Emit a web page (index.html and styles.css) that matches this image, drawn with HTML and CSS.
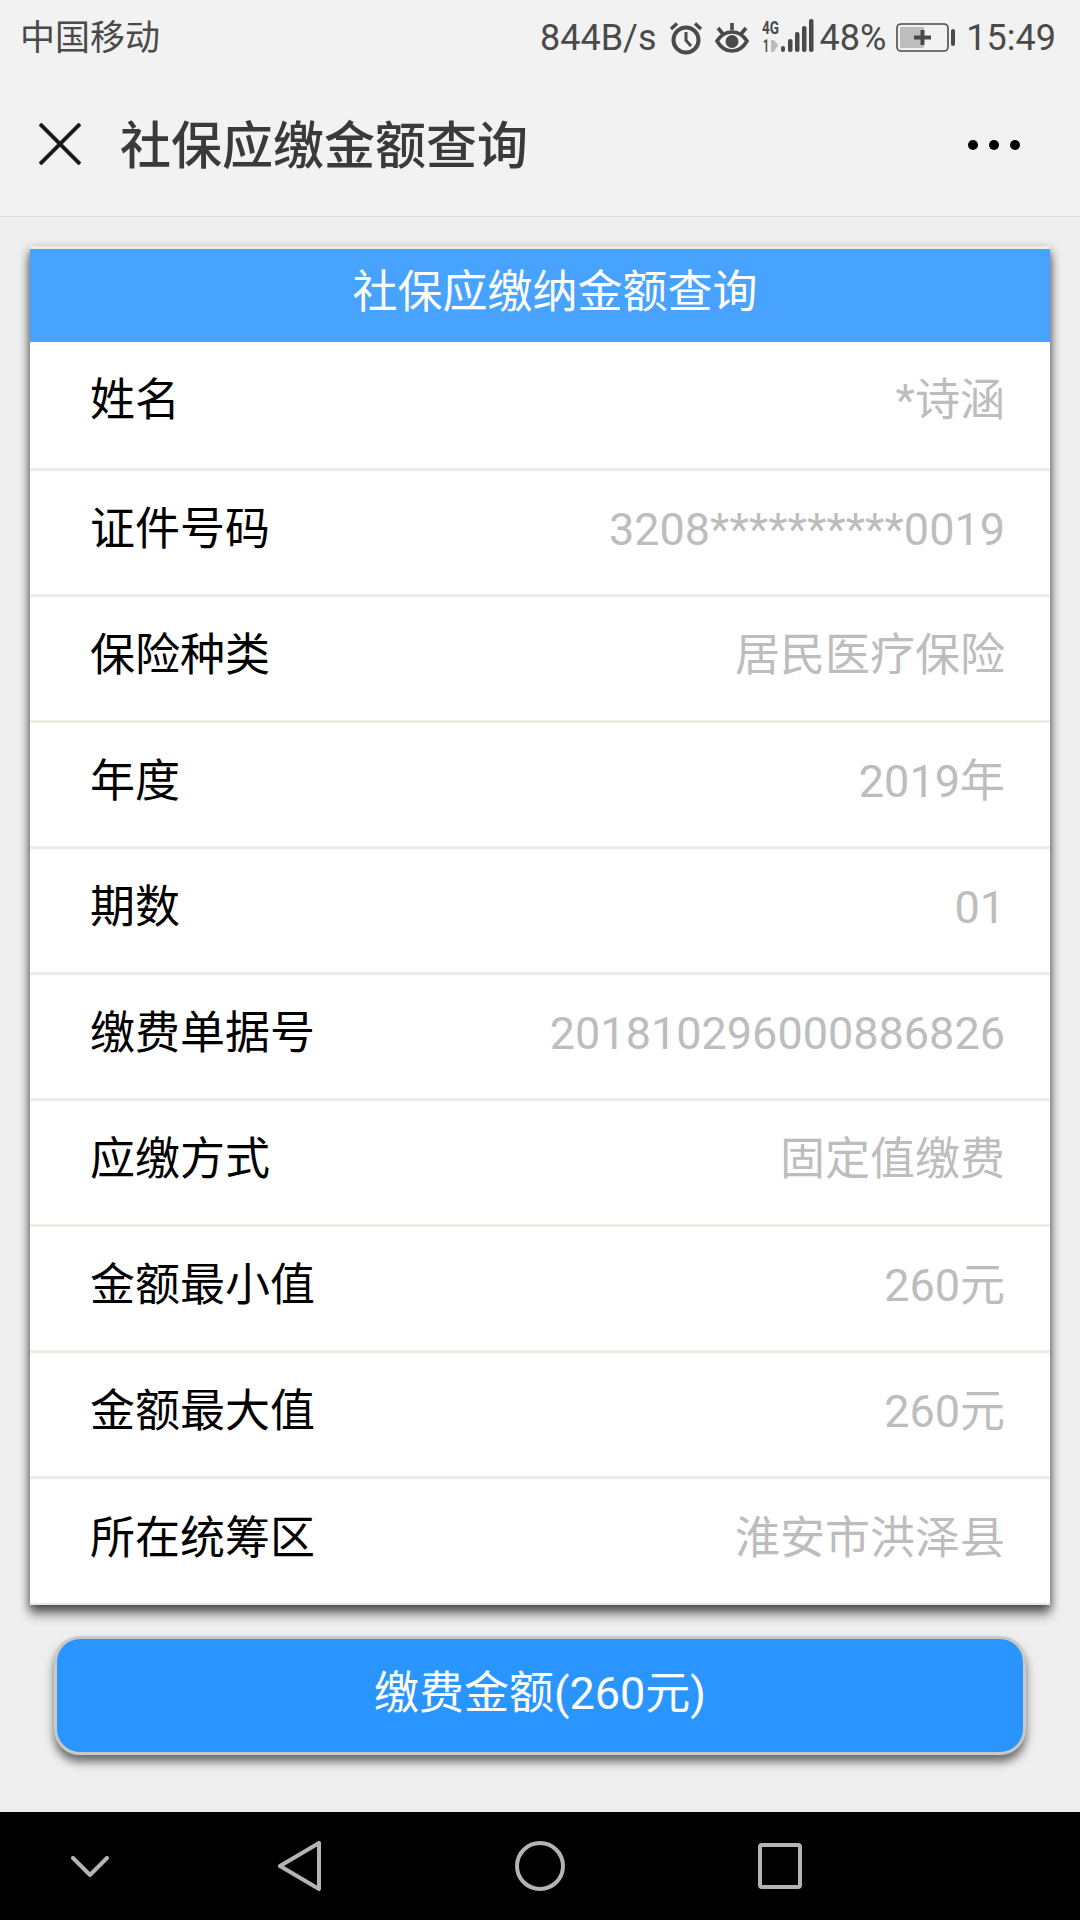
FILE: index.html
```html
<!DOCTYPE html>
<html lang="zh-CN">
<head>
    <meta charset="UTF-8">
    <meta name="viewport" content="width=device-width, initial-scale=1.0">
    <title>社保应缴金额查询</title>
    <link rel="stylesheet" href="styles.css">
</head>
<body>
    <div class="status-bar">
        <span class="carrier">中国移动</span>
        <div class="status-right">
            <span class="speed">844B/s</span>
            <svg class="icon-alarm" width="34" height="34" viewBox="0 0 34 34" fill="none" stroke="#4a4a4a" stroke-width="4">
                <circle cx="17" cy="19" r="12.500"/>
                <path d="M17 11v8.500l5 5.500" stroke-width="3"/>
                <path d="M2 8l6-5.500M32 8l-6-5.500" stroke-width="3.500"/>
            </svg>
            <svg class="icon-eye" width="36" height="32" viewBox="0 0 36 32" fill="none" stroke="#4a4a4a" stroke-width="3.600">
                <path d="M3 19c4-6 9-9 15-9s11 3 15 9c-4 7-9 10-15 10S7 26 3 19z"/>
                <circle cx="18" cy="19.500" r="6.500" fill="#4a4a4a" stroke="none"/>
                <path d="M18 1v7M4 6l5 6M32 6l-5 6"/>
            </svg>
            <svg class="icon-signal" width="52" height="42" viewBox="0 -4 52 42">
                <text x="0" y="15" class="net-text" textLength="17" lengthAdjust="spacingAndGlyphs">4G</text>
                <text x="1" y="33" class="net-text" textLength="6" lengthAdjust="spacingAndGlyphs">1</text>
                <path d="M9 21h3l4 5-4 7h-3z" fill="#bdbdbd"/>
                <rect x="19" y="27" width="4" height="6" rx="2" fill="#4a4a4a"/>
                <rect x="26" y="20" width="4.500" height="13" rx="2" fill="#4a4a4a"/>
                <rect x="33" y="13" width="4.500" height="20" rx="2" fill="#4a4a4a"/>
                <rect x="40" y="7" width="4.500" height="26" rx="2" fill="#4a4a4a"/>
                <rect x="47" y="0" width="4.500" height="33" rx="2" fill="#4a4a4a"/>
            </svg>
            <span class="percent">48%</span>
            <svg class="icon-battery" width="60" height="30" viewBox="0 0 60 30">
                <rect x="1" y="1" width="51" height="27" rx="4" fill="none" stroke="#4a4a4a" stroke-width="1.600"/>
                <rect x="4" y="4" width="24" height="21" rx="1" fill="#bdbdbd"/>
                <path d="M18 14.500h17M26.500 7v15" stroke="#4a4a4a" stroke-width="4"/>
                <rect x="55" y="6" width="4" height="17" rx="2" fill="#4a4a4a"/>
            </svg>
            <span class="clock">15:49</span>
        </div>
    </div>

    <div class="title-bar">
        <svg class="icon-close" width="42" height="42" viewBox="0 0 42 42" fill="none" stroke="#1a1a1a" stroke-width="4">
            <path d="M1 1l40 40M41 1L1 41"/>
        </svg>
        <h1 class="page-title">社保应缴金额查询</h1>
        <div class="more-dots"><i></i><i></i><i></i></div>
    </div>

    <div class="card">
        <div class="card-header">社保应缴纳金额查询</div>
        <div class="row"><span class="row-label">姓名</span><span class="row-value">*诗涵</span></div>
        <div class="row"><span class="row-label">证件号码</span><span class="row-value">3208**********0019</span></div>
        <div class="row"><span class="row-label">保险种类</span><span class="row-value">居民医疗保险</span></div>
        <div class="row"><span class="row-label">年度</span><span class="row-value">2019年</span></div>
        <div class="row"><span class="row-label">期数</span><span class="row-value">01</span></div>
        <div class="row"><span class="row-label">缴费单据号</span><span class="row-value">201810296000886826</span></div>
        <div class="row"><span class="row-label">应缴方式</span><span class="row-value">固定值缴费</span></div>
        <div class="row"><span class="row-label">金额最小值</span><span class="row-value">260元</span></div>
        <div class="row"><span class="row-label">金额最大值</span><span class="row-value">260元</span></div>
        <div class="row"><span class="row-label">所在统筹区</span><span class="row-value">淮安市洪泽县</span></div>
    </div>

    <button class="pay-button">缴费金额(260元)</button>

    <div class="nav-bar">
        <svg class="nav-chevron" width="38" height="21" viewBox="0 0 38 21" fill="none" stroke="#b4b4b4" stroke-width="4" stroke-linecap="round" stroke-linejoin="round">
            <path d="M2 2l17 17L36 2"/>
        </svg>
        <svg class="nav-back" width="43" height="50" viewBox="0 0 43 50" fill="none" stroke="#b4b4b4" stroke-width="4" stroke-linejoin="round">
            <path d="M41 2v46L2 25z"/>
        </svg>
        <svg class="nav-home" width="50" height="50" viewBox="0 0 50 50" fill="none" stroke="#b4b4b4" stroke-width="4">
            <circle cx="25" cy="25" r="23"/>
        </svg>
        <svg class="nav-recent" width="44" height="46" viewBox="0 0 44 46" fill="none" stroke="#b4b4b4" stroke-width="4" stroke-linejoin="round">
            <rect x="2" y="2" width="40" height="42" rx="2"/>
        </svg>
    </div>
</body>
</html>
```

FILE: styles.css
```css
* {
    box-sizing: border-box;
}

html,
body {
    margin: 0;
    padding: 0;
}

body {
    width: 1080px;
    height: 1920px;
    overflow: hidden;
    background-color: #efefef;
    font-family: Roboto, "Noto Sans CJK SC", sans-serif;
    display: flex;
    flex-direction: column;
}

/* Barra de estado */
.status-bar {
    height: 75px;
    padding: 0 24px 0 20px;
    display: flex;
    align-items: center;
    justify-content: space-between;
    background-color: #f2f2f2;
    color: #4a4a4a;
    font-size: 36px;
    line-height: 42px;
}

.carrier {
    margin-top: 2px;
    font-size: 35px;
}

.status-right {
    display: flex;
    align-items: center;
}

.speed {
    margin-right: 12px;
}

.icon-alarm {
    margin-right: 11px;
}

.icon-eye {
    margin-right: 12px;
}

.icon-signal {
    margin-bottom: 4px;
}

.net-text {
    font-size: 18px;
    font-weight: bold;
    fill: #4a4a4a;
}

.percent {
    margin-left: 6px;
    margin-right: 10px;
}

.icon-battery {
    margin-right: 10px;
}

/* Barra de titulo */
.title-bar {
    height: 142px;
    padding: 0 60px 0 39px;
    display: flex;
    align-items: center;
    background-color: #f2f2f2;
    border-bottom: 1px solid #dcdcdc;
}

.icon-close {
    margin-bottom: 4px;
}

.page-title {
    margin: 2px 0 0 39px;
    flex: 1;
    font-size: 51px;
    line-height: 60px;
    font-weight: 500;
    color: #3a3a3a;
}

.more-dots {
    margin-bottom: 2px;
    display: flex;
    gap: 11px;
}

.more-dots i {
    width: 10px;
    height: 10px;
    border-radius: 50%;
    background-color: #000;
}

/* Tarjeta */
.card {
    width: 1020px;
    margin: 29px 0 0 30px;
    background-color: #fff;
    border-top: 3px solid #ecece4;
    border-bottom: 2px solid #e8e8dc;
    box-shadow: 0 5px 10px rgba(0, 0, 0, 0.7), 0 12px 10px rgba(0, 0, 0, 0.2);
}

.card-header {
    height: 93px;
    padding: 0 0 6px 30px;
    display: flex;
    align-items: center;
    justify-content: center;
    background-color: #47a3ff;
    color: #fff;
    font-size: 45px;
    line-height: 54px;
}

.row {
    height: 126px;
    padding: 0 45px 5px 60px;
    display: flex;
    align-items: center;
    justify-content: space-between;
    border-bottom: 3px solid #ecece4;
    font-size: 45px;
    line-height: 54px;
}

.card-header + .row {
    height: 129px;
    padding-bottom: 8px;
}

.row:last-child {
    height: 124px;
    border-bottom: none;
}

.row-label {
    color: #000;
}

.row-value {
    color: #bdbdbd;
}

/* Boton de pago */
.pay-button {
    display: block;
    width: 972px;
    height: 119px;
    margin: 31px 0 0 54px;
    padding: 0 0 3px;
    background-color: #2b95ff;
    color: #fff;
    border: 3px solid #c9c9c9;
    border-radius: 26px;
    box-shadow: 0 7px 10px rgba(0, 0, 0, 0.55);
    font-family: Roboto, "Noto Sans CJK SC", sans-serif;
    font-size: 45px;
    line-height: 54px;
}

/* Barra de navegacion */
.nav-bar {
    position: absolute;
    left: 0;
    top: 1812px;
    width: 1080px;
    height: 108px;
    padding-left: 71px;
    display: flex;
    align-items: center;
    background-color: #000;
}

.nav-chevron {
    margin-right: 169px;
}

.nav-back {
    margin-right: 194px;
}

.nav-home {
    margin-right: 193px;
}
```
